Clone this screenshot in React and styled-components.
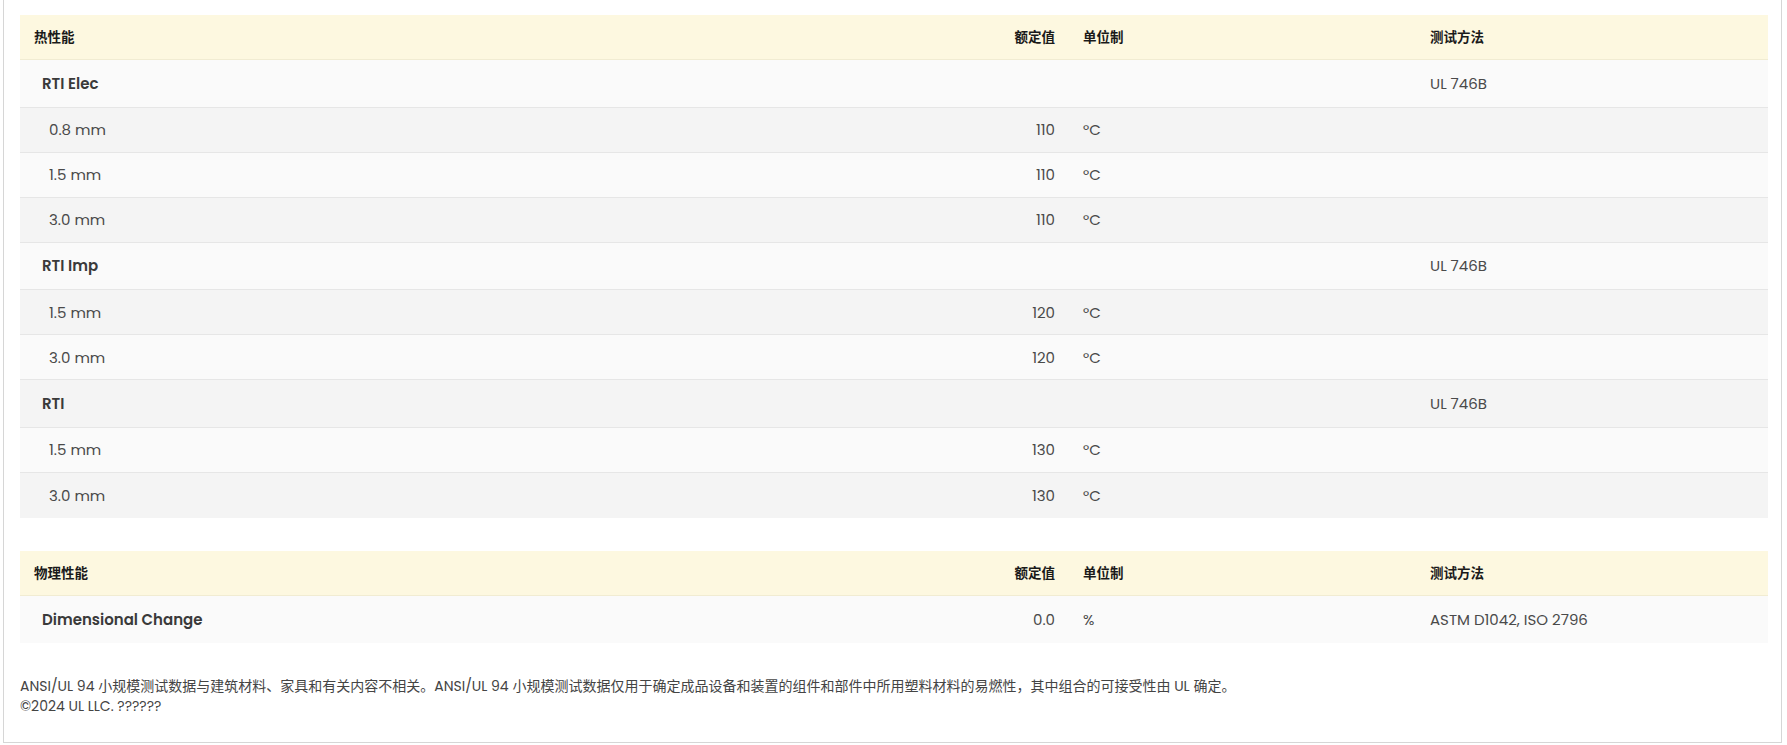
import React from "react";
import styled, { createGlobalStyle } from "styled-components";

const Global = createGlobalStyle`
  body { margin: 0; background: #fff; font-family: Poppins, Inter, "Noto Sans CJK SC", sans-serif; }
`;

const Frame = styled.div`
  margin: 0 5px 0 3px;
  border: 1px solid #d6d6d6;
  border-top: none;
  padding: 15px 13px 26px 16px;
  height: 743px;
  box-sizing: border-box;
`;

const Table = styled.div`
  margin-bottom: 33px;
`;

const Row = styled.div`
  display: grid;
  grid-template-columns: 849px 200px 347px 1fr;
  align-items: center;
  height: ${(p) => p.$h}px;
  background: ${(p) => p.$bg};
  border-bottom: 1px solid ${(p) => (p.$head ? "#f1ecd2" : "#e6e6e6")};
  box-sizing: border-box;
  &:last-child { border-bottom: none; }
`;

const Cell = styled.div`
  padding: 0 14px;
  font-size: ${(p) => (p.$head ? 13.5 : 15)}px;
  font-weight: ${(p) => (p.$head || p.$bold ? 600 : 400)};
  color: ${(p) => (p.$head ? "#1a1a1a" : p.$bold ? "#3a3a3a" : "#4a4a4a")};
  text-align: ${(p) => (p.$right ? "right" : "left")};
  padding-left: ${(p) => p.$pl ?? 14}px;
  white-space: nowrap;
`;

const Footer = styled.div`
  font-size: 14px;
  color: #444;
  line-height: 20px;
`;

function DataTable({ title, rows }) {
  return (
    <Table>
      <Row $h={45} $bg="#fdf8e0" $head>
        <Cell $head $pl={14}>{title}</Cell>
        <Cell $head $right>额定值</Cell>
        <Cell $head>单位制</Cell>
        <Cell $head>测试方法</Cell>
      </Row>
      {rows.map((r, i) => (
        <Row key={i} $h={r.group ? 47.5 : 45} $bg={i % 2 === 0 ? "#fafafa" : "#f4f4f4"}>
          <Cell $bold={r.group} $pl={r.group ? 22 : 29}>{r.name}</Cell>
          <Cell $right>{r.value}</Cell>
          <Cell>{r.unit}</Cell>
          <Cell>{r.method}</Cell>
        </Row>
      ))}
    </Table>
  );
}

const thermal = [
  { group: true, name: "RTI Elec", method: "UL 746B" },
  { name: "0.8 mm", value: "110", unit: "°C" },
  { name: "1.5 mm", value: "110", unit: "°C" },
  { name: "3.0 mm", value: "110", unit: "°C" },
  { group: true, name: "RTI Imp", method: "UL 746B" },
  { name: "1.5 mm", value: "120", unit: "°C" },
  { name: "3.0 mm", value: "120", unit: "°C" },
  { group: true, name: "RTI", method: "UL 746B" },
  { name: "1.5 mm", value: "130", unit: "°C" },
  { name: "3.0 mm", value: "130", unit: "°C" },
];

const physical = [
  { group: true, name: "Dimensional Change", value: "0.0", unit: "%", method: "ASTM D1042, ISO 2796" },
];

export default function App() {
  return (
    <>
      <Global />
      <Frame>
        <DataTable title="热性能" rows={thermal} />
        <DataTable title="物理性能" rows={physical} />
        <Footer>
          ANSI/UL 94 小规模测试数据与建筑材料、家具和有关内容不相关。ANSI/UL 94 小规模测试数据仅用于确定成品设备和装置的组件和部件中所用塑料材料的易燃性，其中组合的可接受性由 UL 确定。
          <br />
          ©2024 UL LLC. ??????
        </Footer>
      </Frame>
    </>
  );
}
